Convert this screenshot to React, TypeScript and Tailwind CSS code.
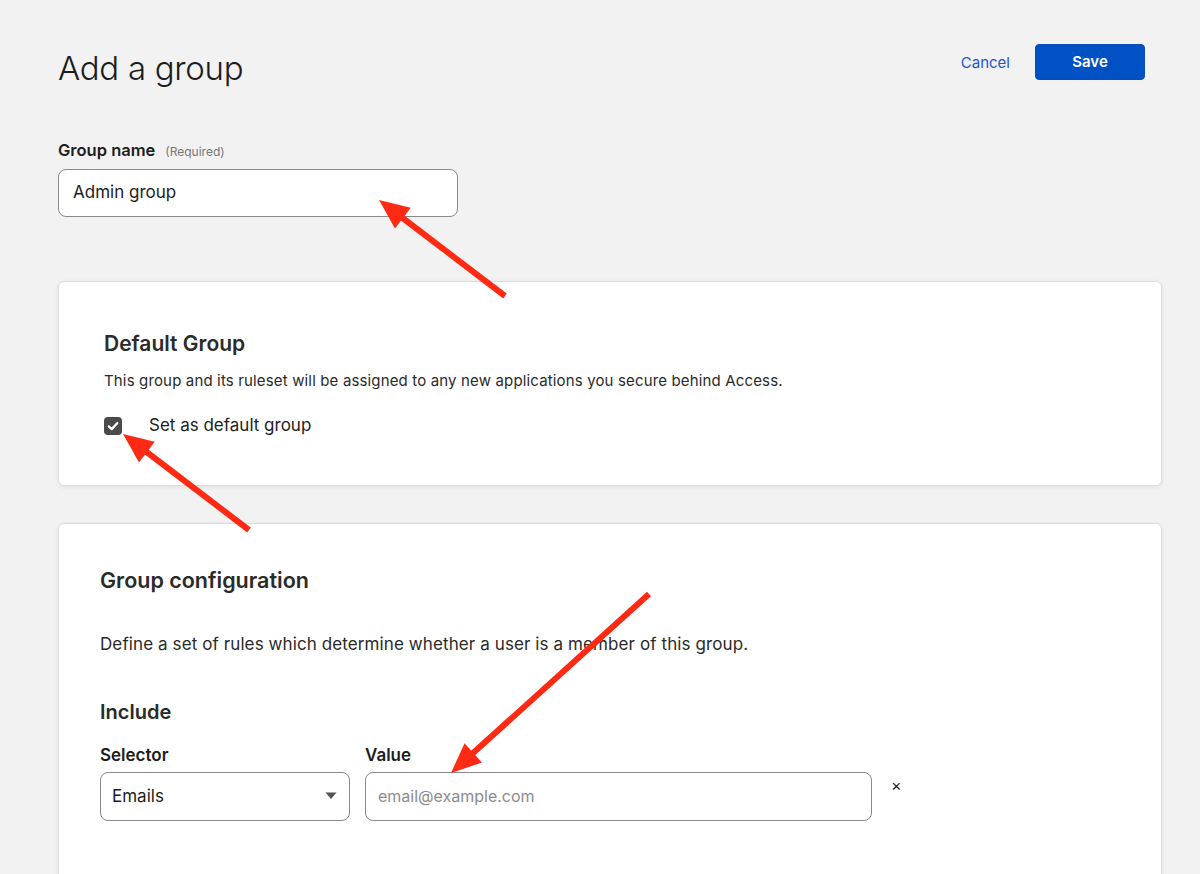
import React from "react";

function Arrow({ x1, y1, x2, y2 }: { x1: number; y1: number; x2: number; y2: number }) {
  const dx = x2 - x1;
  const dy = y2 - y1;
  const len = Math.sqrt(dx * dx + dy * dy);
  const ux = dx / len;
  const uy = dy / len;
  const headLen = 30;
  const headW = 13;
  const bx = x2 - ux * headLen;
  const by = y2 - uy * headLen;
  const px = -uy;
  const py = ux;
  const p1 = `${bx + px * headW},${by + py * headW}`;
  const p2 = `${bx - px * headW},${by - py * headW}`;
  const lx = x2 - ux * (headLen - 4);
  const ly = y2 - uy * (headLen - 4);
  return (
    <g>
      <line x1={x1} y1={y1} x2={lx} y2={ly} stroke="#fe2a14" strokeWidth={6} />
      <polygon points={`${x2},${y2} ${p1} ${p2}`} fill="#fe2a14" />
    </g>
  );
}

export default function App() {
  return (
    <div
      className="relative min-h-[874px] h-[874px] overflow-hidden bg-[#f2f2f2] text-[#222]"
      style={{ fontFamily: "Inter, 'Noto Sans', sans-serif" }}
    >
      <div className="pl-[58px] pr-[38px] pt-[44px]">
        <div className="flex items-start justify-between">
          <h1 className="mt-[2px] text-[33px] font-light leading-[44px] tracking-[-0.3px] text-[#1d1d1d]">
            Add a group
          </h1>
          <div className="mr-[17px] flex items-center gap-[25px]">
            <button className="mt-[3px] text-[15px] text-[#1f55d4]">Cancel</button>
            <button className="h-[36px] w-[110px] rounded-[4px] border border-[#0a4bb8] bg-[#0051c3] text-[15px] font-semibold text-white">
              Save
            </button>
          </div>
        </div>

        <div className="mt-[48px] flex items-baseline gap-[10px]">
          <span className="text-[16.5px] font-semibold text-[#1d1d1d]">Group name</span>
          <span className="text-[12px] text-[#777]">(Required)</span>
        </div>
        <div className="mt-[6px] flex h-[48px] w-[400px] items-center rounded-[8px] border border-[#8a8a8a] bg-white px-[14px] text-[17px] text-[#1d1d1d]">
          Admin group
        </div>

        <div className="mt-[64px] h-[205px] rounded-[6px] border border-[#dcdcdc] bg-white pl-[45px] pt-[48px] shadow-[0_1px_4px_rgba(0,0,0,0.08)]">
          <h2 className="text-[21px] font-semibold leading-[28px] text-[#2a2a2a]">Default Group</h2>
          <p className="mt-[13px] text-[15px] leading-[20px] tracking-[0.15px] text-[#2a2a2a]">
            This group and its ruleset will be assigned to any new applications you secure behind Access.
          </p>
          <div className="mt-[22px] flex items-center gap-[27px]">
            <div className="flex h-[18px] w-[18px] items-center justify-center rounded-[4px] bg-[#4a4a4a]">
              <svg width="12" height="12" viewBox="0 0 12 12">
                <path d="M1.8 6.4 L4.7 9.1 L10.2 3.2" fill="none" stroke="white" strokeWidth="2.3" strokeLinecap="round" strokeLinejoin="round" />
              </svg>
            </div>
            <span className="text-[17px] text-[#1d1d1d]">Set as default group</span>
          </div>
        </div>

        <div className="mt-[37px] h-[400px] rounded-[6px] border border-[#dcdcdc] bg-white pl-[41px] pt-[42px] shadow-[0_1px_4px_rgba(0,0,0,0.08)]">
          <h2 className="text-[21.5px] font-semibold leading-[28px] text-[#2a2a2a]">Group configuration</h2>
          <p className="mt-[38px] text-[17px] leading-[24px] tracking-[0.1px] text-[#2a2a2a]">
            Define a set of rules which determine whether a user is a member of this group.
          </p>
          <h3 className="mt-[42px] text-[20px] font-semibold leading-[28px] text-[#2a2a2a]">Include</h3>
          <div className="mt-[17px] flex items-start">
            <div className="flex w-[265px] flex-col">
              <span className="text-[17px] font-semibold leading-[24px] text-[#1d1d1d]">Selector</span>
              <div className="mt-[5px] flex h-[49px] w-[250px] items-center justify-between rounded-[8px] border border-[#8a8a8a] bg-white pl-[11px] pr-[12px]">
                <span className="text-[17px] text-[#1d1d1d]">Emails</span>
                <svg width="12" height="8" viewBox="0 0 12 8">
                  <path d="M0.5 0.5 L11.5 0.5 L6 7 Z" fill="#555" />
                </svg>
              </div>
            </div>
            <div className="flex flex-col">
              <span className="text-[17px] font-semibold leading-[24px] text-[#1d1d1d]">Value</span>
              <div className="mt-[5px] flex h-[49px] w-[507px] items-center rounded-[8px] border border-[#8a8a8a] bg-white pl-[12px] text-[16px] text-[#8c8c8c]">
                email@example.com
              </div>
            </div>
            <span className="ml-[19px] mt-[32px] text-[16px] leading-[20px] text-[#1d1d1d]">×</span>
          </div>
        </div>
      </div>

      <svg className="pointer-events-none absolute left-0 top-0" width="1200" height="874">
        <Arrow x1={505} y1={296} x2={379} y2={200} />
        <Arrow x1={249} y1={530} x2={123} y2={434} />
        <Arrow x1={649} y1={594} x2={451} y2={773} />
      </svg>
    </div>
  );
}
